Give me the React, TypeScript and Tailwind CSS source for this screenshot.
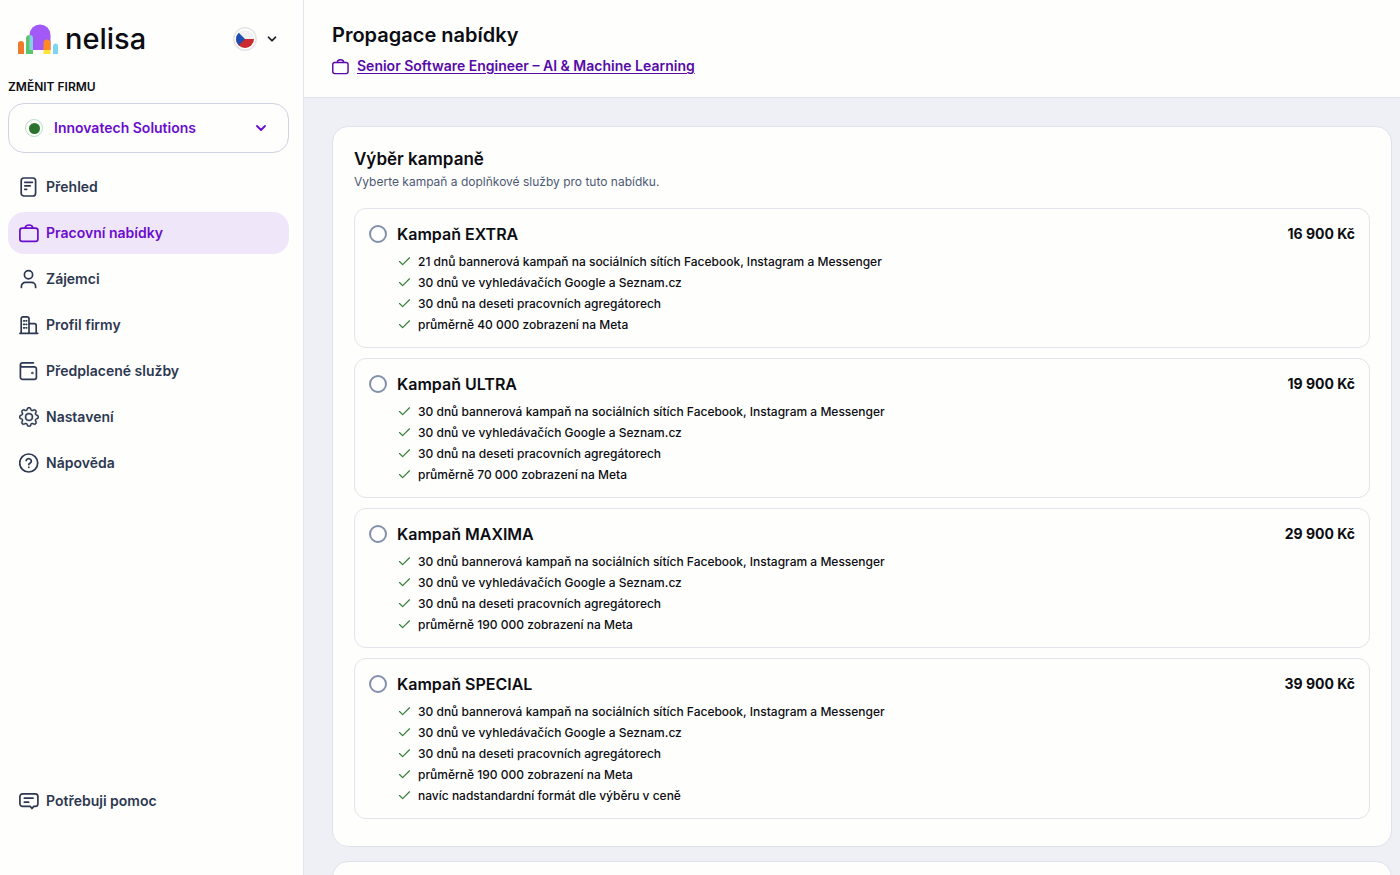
import type { ReactNode } from "react";
import { Check, ChevronDown } from "lucide-react";
import { BsGear } from "react-icons/bs";

function Icon({ children, size = 20 }: { children: ReactNode; size?: number }) {
  return (
    <svg
      width={size}
      height={size}
      viewBox="0 0 20 20"
      fill="none"
      stroke="currentColor"
      strokeWidth="1.7"
      strokeLinecap="round"
      strokeLinejoin="round"
      className="shrink-0"
      aria-hidden="true"
    >
      {children}
    </svg>
  );
}

function Briefcase({ size }: { size?: number }) {
  return (
    <Icon size={size}>
      <rect x="0.9" y="5.2" width="18" height="13.2" rx="2.4" />
      <path d="M6.2 5C6.4 3 7.8 2 10 2s3.600 1 3.800 3" />
    </Icon>
  );
}

const NAV = [
  {
    label: "Přehled",
    icon: (
      <Icon>
        <rect x="2.2" y="1" width="14.4" height="18" rx="2.8" />
        <path d="M5.800 5.300h7.600M5.800 8.800h5.400M5.800 12.300h1.800" />
      </Icon>
    ),
  },
  { label: "Pracovní nabídky", icon: <Briefcase />, active: true },
  {
    label: "Zájemci",
    icon: (
      <Icon>
        <circle cx="9.5" cy="5.8" r="4.1" />
        <path d="M2.400 18.500v-1.100a4 4 0 0 1 4-4h6.200a4 4 0 0 1 4 4v1.100" />
      </Icon>
    ),
  },
  {
    label: "Profil firmy",
    icon: (
      <Icon>
        <path d="M0.900 18.300h17.800M2.200 18.300V3.700a1.800 1.800 0 0 1 1.800-1.800h4.200A1.800 1.800 0 0 1 10 3.700v14.600M10 8.700h5.400a1.800 1.800 0 0 1 1.800 1.800v7.800" />
        <path d="M4.700 5.800h.8M7.200 5.800h.5M4.700 9.300h.8M7.200 9.300h.5M4.700 12.800h.8M7.200 12.800h.5" />
      </Icon>
    ),
  },
  {
    label: "Předplacené služby",
    icon: (
      <Icon>
        <path d="M14.400 1.800H3.600A2.200 2.200 0 0 0 1.400 3.900c0 1.100.8 1.900 1.900 1.900h11.900a2.200 2.200 0 0 1 2.200 2.200v8.200a2.200 2.200 0 0 1-2.200 2.200H3.600a2.200 2.200 0 0 1-2.200-2.200V4" />
        <circle cx="13.4" cy="12" r="0.4" fill="currentColor" />
      </Icon>
    ),
  },
  {
    label: "Nastavení",
    icon: <BsGear size={20} className="shrink-0 stroke-current [stroke-width:0.3]" aria-hidden="true" />,
  },
  {
    label: "Nápověda",
    icon: (
      <Icon>
        <circle cx="9.7" cy="10" r="9" />
        <path d="M7.200 7.600a2.600 2.600 0 0 1 5.100.8c0 1.600-2.500 2-2.500 3.200" />
        <path d="M9.800 14.200v.1" />
      </Icon>
    ),
  },
];

const REACH = ["30 dnů ve vyhledávačích Google a Seznam.cz", "30 dnů na deseti pracovních agregátorech"];
const BANNER = "dnů bannerová kampaň na sociálních sítích Facebook, Instagram a Messenger";

const CAMPAIGNS = [
  {
    id: "extra",
    name: "Kampaň EXTRA",
    price: "16 900 Kč",
    features: [`21 ${BANNER}`, ...REACH, "průměrně 40 000 zobrazení na Meta"],
  },
  {
    id: "ultra",
    name: "Kampaň ULTRA",
    price: "19 900 Kč",
    features: [`30 ${BANNER}`, ...REACH, "průměrně 70 000 zobrazení na Meta"],
  },
  {
    id: "maxima",
    name: "Kampaň MAXIMA",
    price: "29 900 Kč",
    features: [`30 ${BANNER}`, ...REACH, "průměrně 190 000 zobrazení na Meta"],
  },
  {
    id: "special",
    name: "Kampaň SPECIAL",
    price: "39 900 Kč",
    features: [
      `30 ${BANNER}`,
      ...REACH,
      "průměrně 190 000 zobrazení na Meta",
      "navíc nadstandardní formát dle výběru v ceně",
    ],
  },
];

function Logo() {
  return (
    <a href="#" className="flex items-center gap-1.5">
      <svg width="41" height="30" viewBox="0 0 41 30" aria-hidden="true">
        <path d="M11.500 26V11a10.500 10.500 0 0 1 21 0v15z" fill="#a259f7" />
        <path d="M0 30V20a3 3 0 0 1 6 0v10z" fill="#f07a2c" />
        <path d="M8 30V14.500a3.500 3.500 0 0 1 7 0V30z" fill="#5cc46c" />
        <path d="M11.500 26V11a3.500 3.500 0 0 1 3.500 3.500V26z" fill="#86cfe6" />
        <path d="M25.500 26v-7a3.500 3.500 0 0 1 7 0v7z" fill="#fb8a24" />
        <path d="M25.500 26h7v4h-7z" fill="#fde23c" />
        <path d="M35 30v-8a2.500 2.500 0 0 1 5 0v8z" fill="#7fd5ee" />
      </svg>
      <span className="text-[29px] leading-8 font-medium text-[#0c0d12]">nelisa</span>
    </a>
  );
}

function LanguageSwitch() {
  return (
    <button type="button" aria-label="Čeština" className="flex items-center gap-2 text-[#14141f]">
      <svg width="24" height="24" viewBox="0 0 24 24" aria-hidden="true">
        <clipPath id="flag">
          <circle cx="12" cy="12" r="9" />
        </clipPath>
        <circle cx="12" cy="12" r="11.200" fill="#fff" stroke="#e4e4e6" strokeWidth="1.500" />
        <g clipPath="url(#flag)">
          <path d="M0 0h24v12H0z" fill="#f0f0f0" />
          <path d="M0 12h24v12H0z" fill="#cb2a30" />
          <path d="M0 0l12 12L0 24z" fill="#1e4fb0" />
        </g>
      </svg>
      <ChevronDown size={14} strokeWidth={3} />
    </button>
  );
}

function Sidebar() {
  return (
    <aside className="flex w-[304px] shrink-0 flex-col border-r border-[#e3e4ec] px-2 pt-5">
      <div className="flex h-[37px] items-center justify-between pr-4 pl-2.5">
        <Logo />
        <LanguageSwitch />
      </div>

      <label htmlFor="company" className="mt-5 text-xs leading-5 font-semibold text-[#0c0d12]">
        ZMĚNIT FIRMU
      </label>
      <div className="mt-1.5 mr-1.5 grid items-center">
        <select
          id="company"
          className="col-start-1 row-start-1 h-[50px] w-full appearance-none rounded-2xl border border-[#cfd3e0] bg-transparent pr-10 pl-[45px] text-sm font-semibold text-[#6a0dcd]"
        >
          <option>Innovatech Solutions</option>
        </select>
        <span className="pointer-events-none col-start-1 row-start-1 ml-[17px] flex size-[18px] items-center justify-center rounded-full border border-[#b9dfc4]">
          <span className="size-[11px] rounded-full bg-[#2c7330]" />
        </span>
        <ChevronDown
          size={16}
          strokeWidth={2.8}
          className="pointer-events-none col-start-1 row-start-1 mr-5 justify-self-end text-[#6a0dcd]"
        />
      </div>

      <nav className="mt-[13px] mr-1.5 flex flex-col gap-1">
        {NAV.map((item) => (
          <a
            key={item.label}
            href="#"
            className={
              item.active
                ? "flex h-[42px] items-center gap-[7px] rounded-2xl bg-[#f0e6fa] px-[11px] text-sm font-semibold text-[#6a0dcd]"
                : "flex h-[42px] items-center gap-[7px] rounded-2xl px-[11px] text-sm font-semibold text-[#2d3850]"
            }
          >
            {item.icon}
            {item.label}
          </a>
        ))}
      </nav>

      <a
        href="#"
        className="mt-auto mr-1.5 mb-[53px] flex h-[42px] items-center gap-[7px] px-[11px] text-sm font-semibold text-[#2d3850]"
      >
        <Icon>
          <path d="M3.600 2.800h12.600a2.700 2.700 0 0 1 2.700 2.700v7.200a2.700 2.700 0 0 1-2.700 2.700h-1.500L13 17.500l-1.800-2.100H3.600a2.700 2.700 0 0 1-2.700-2.700V5.500a2.700 2.700 0 0 1 2.700-2.700z" />
          <path d="M5.400 7.200h8.600M5.400 11.200h4.200" />
        </Icon>
        Potřebuji pomoc
      </a>
    </aside>
  );
}

export default function App() {
  return (
    <div className="flex h-screen bg-[#fefefd] font-['Inter',sans-serif] text-[#0c0d12]">
      <Sidebar />

      <div className="flex min-w-0 flex-1 flex-col">
        <header className="h-[98px] shrink-0 border-b border-[#e0e2ea] px-7 pt-5">
          <h1 className="text-xl leading-[30px] font-semibold">Propagace nabídky</h1>
          <a href="#" className="mt-1 flex items-center gap-2 text-sm leading-6 font-semibold text-[#570aa8]">
            <Briefcase size={17} />
            <span className="underline underline-offset-2">Senior Software Engineer – AI &amp; Machine Learning</span>
          </a>
        </header>

        <main className="flex flex-1 flex-col gap-3.5 overflow-y-auto bg-[#eff0f5] pt-7 pr-2 pb-7 pl-7 [scrollbar-width:none]">
          <section className="shrink-0 rounded-2xl border border-[#dfe2ea] bg-[#fefefd] px-[21px] pt-5 pb-[27px]">
            <h2 className="text-[17px] leading-6 font-semibold">Výběr kampaně</h2>
            <p className="text-xs leading-[22px] text-[#4d5973]">
              Vyberte kampaň a doplňkové služby pro tuto nabídku.
            </p>

            <div className="mt-[15px] flex flex-col gap-2.5">
              {CAMPAIGNS.map((campaign) => (
                <div key={campaign.id} className="rounded-xl border border-[#e2e4ec] px-3.5 pt-3 pb-3">
                  <div className="flex items-center">
                    <input
                      type="radio"
                      name="campaign"
                      id={campaign.id}
                      className="size-[18px] appearance-none rounded-full border-2 border-[#8490ab] bg-white checked:border-[6px] checked:border-[#6a0dcd]"
                    />
                    <label htmlFor={campaign.id} className="ml-2.5 flex-1 text-base leading-[26px] font-semibold">
                      {campaign.name}
                    </label>
                    <span className="text-sm font-bold">{campaign.price}</span>
                  </div>
                  <ul className="mt-1 ml-7">
                    {campaign.features.map((feature) => (
                      <li key={feature} className="flex items-center gap-1.5 text-xs leading-[21px] font-medium">
                        <Check size={15} strokeWidth={1.8} className="text-[#2f7d33]" />
                        {feature}
                      </li>
                    ))}
                  </ul>
                </div>
              ))}
            </div>
          </section>

          <section className="min-h-40 shrink-0 rounded-2xl border border-[#dfe2ea] bg-[#fefefd]" />
        </main>
      </div>
    </div>
  );
}
